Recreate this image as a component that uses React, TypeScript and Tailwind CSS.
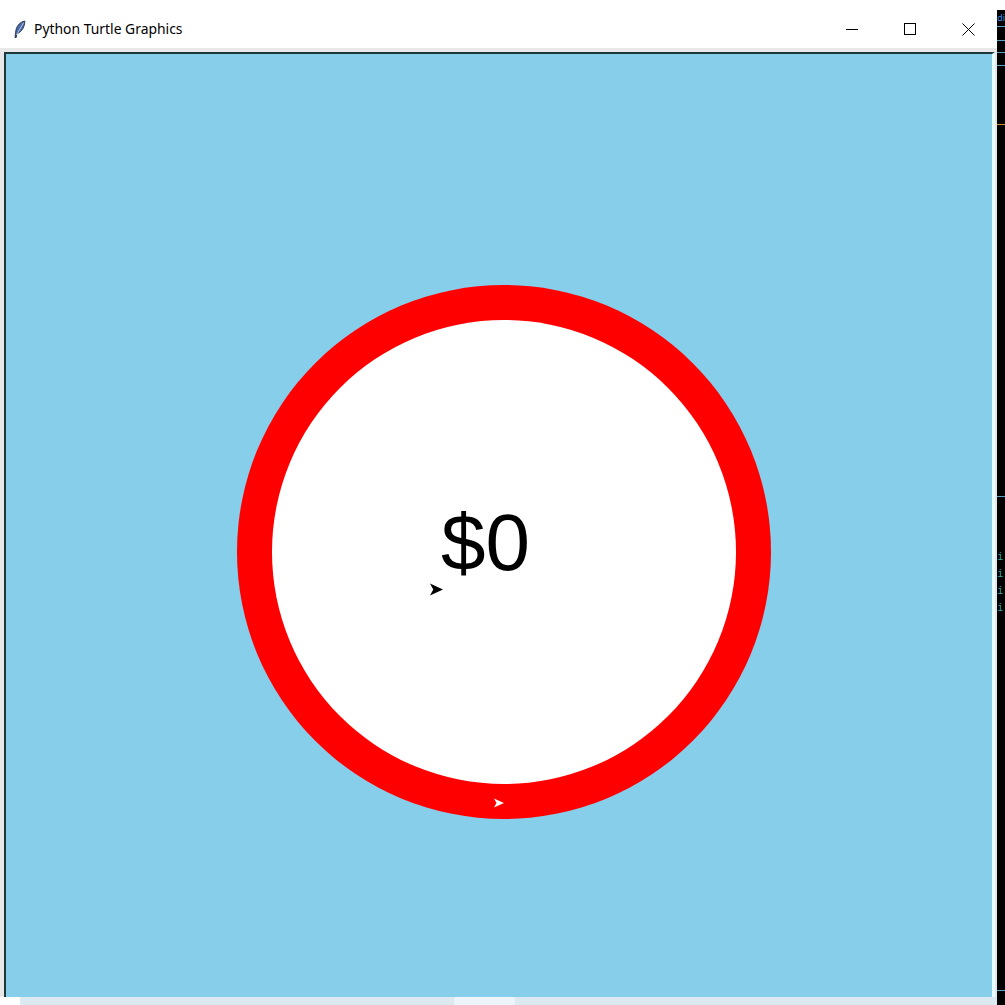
function Feather() {
  return (
    <svg width="13" height="19" viewBox="0 0 13 19">
      <path d="M11.8 1 C6.5 2 3 6.5 2.6 12.5 L2 17.5 L3.2 17.5 L3.8 13.8 C9 12 11.8 6.5 11.8 1 Z" fill="#4a6aa5" stroke="#1f2d4a" strokeWidth="0.9" />
      <path d="M10.6 2.8 L3.5 15" stroke="#d3def2" strokeWidth="0.8" />
    </svg>
  )
}

function TurtleArrow({ size, color }: { size: number; color: string }) {
  return (
    <svg width={size} height={size} viewBox="0 0 12 12">
      <polygon points="0,0.5 12,6 0,11.5 3,6" fill={color} />
    </svg>
  )
}

export default function App() {
  return (
    <div className="relative w-[1005px] h-[1005px] overflow-hidden bg-white" style={{ fontFamily: '"Noto Sans", "Liberation Sans", sans-serif' }}>
      <div className="flex h-full">
        {/* turtle window */}
        <div className="flex flex-col w-[999px] h-full">
          <div className="flex items-center h-[48px] pt-[10px] bg-white shrink-0">
            <div className="pl-[13px] pt-[1px]">
              <Feather />
            </div>
            <span className="ml-[8px] text-[13.9px] text-black leading-none">Python Turtle Graphics</span>
            <div className="ml-auto flex items-center h-full">
              <div className="w-[58px] flex justify-center">
                <svg width="12" height="12" viewBox="0 0 12 12">
                  <path d="M0 6.5 H12" stroke="#000" strokeWidth="1" />
                </svg>
              </div>
              <div className="w-[58px] flex justify-center">
                <svg width="12" height="12" viewBox="0 0 12 12">
                  <rect x="0.5" y="0.5" width="11" height="11" fill="none" stroke="#000" strokeWidth="1" />
                </svg>
              </div>
              <div className="w-[58px] flex justify-center">
                <svg width="13" height="13" viewBox="0 0 13 13">
                  <path d="M0.5 0.5 L12.5 12.5 M12.5 0.5 L0.5 12.5" stroke="#000" strokeWidth="1" />
                </svg>
              </div>
            </div>
          </div>
          <div className="flex-1 flex flex-col bg-[#e8e8e8] pt-[4px] pl-[4px] pr-[2px]">
            <div className="flex-1 border-t-[2px] border-l-[2px] border-[#20373a] bg-[#87ceeb] border-r-[3px] border-r-[#e6ffff]">
              <div className="ml-[231px] mt-[231px] w-[534px] h-[534px] rounded-full bg-[#ff0000] p-[35px]">
                <div className="relative w-[464px] h-[464px] rounded-full bg-white">
                  <div
                    className="pl-[169px] pt-[183px] text-[80px] leading-none text-black"
                    style={{ fontFamily: '"Liberation Sans", Arial, sans-serif' }}
                  >
                    $0
                  </div>
                  <div className="absolute left-[158px] top-[263px]">
                    <TurtleArrow size={13} color="#000000" />
                  </div>
                  <div className="absolute left-[222px] top-[478px]">
                    <TurtleArrow size={10} color="#ffffff" />
                  </div>
                </div>
              </div>
            </div>
          </div>
          <div className="h-[8px] shrink-0 flex bg-[#dde9f1]">
            <div className="w-[20px] bg-white" />
            <div className="w-[434px]" />
            <div className="w-[61px] bg-[#eef5fa]" />
          </div>
        </div>
        {/* window behind */}
        <div className="flex-1 flex flex-col bg-black">
          <div className="h-[10px] bg-white" />
          <div className="h-[16px] text-[9px] leading-[16px] text-[#3a8ee6]">di</div>
          <div className="h-[1px] bg-[#5aa0c8]" />
          <div className="h-[13px]" />
          <div className="h-[1px] bg-[#5aa0c8]" />
          <div className="h-[11px]" />
          <div className="h-[1px] bg-[#5aa0c8]" />
          <div className="h-[12px]" />
          <div className="h-[1px] bg-[#5aa0c8]" />
          <div className="h-[58px]" />
          <div className="h-[1px] bg-[#d08a3a]" />
          <div className="h-[371px]" />
          <div className="h-[1px] bg-[#5aa0c8]" />
          <div className="pt-[52px] flex flex-col text-[#3aa6a6] text-[10px] leading-[17px] font-mono">
            <span>i</span>
            <span>i</span>
            <span>i</span>
            <span>i</span>
          </div>
          <div className="mt-auto mb-[14px] h-[1px] bg-[#5aa0c8]" />
        </div>
      </div>
    </div>
  )
}
